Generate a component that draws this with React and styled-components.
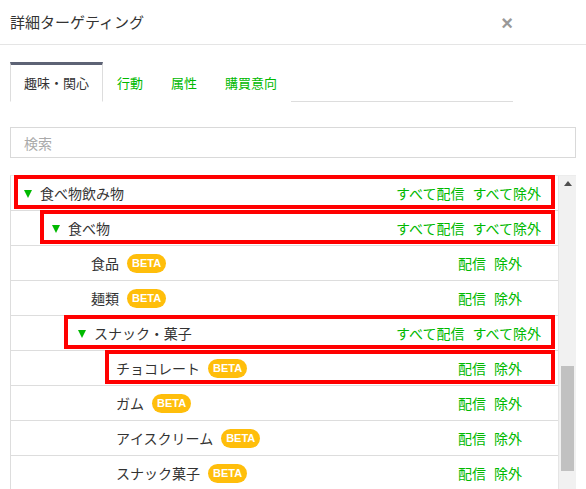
import React, { useState } from 'react';
import styled, { createGlobalStyle } from 'styled-components';

const GREEN = '#00b900';

const GlobalStyle = createGlobalStyle`
  body {
    margin: 0;
    background: #fff;
    overflow: hidden;
    font-family: "Noto Sans CJK JP", "Noto Sans", sans-serif;
    color: #333;
  }
`;

const rows = [
  { label: '食べ物飲み物', group: true, pad: 13, box: 3 },
  { label: '食べ物', group: true, pad: 41, box: 29 },
  { label: '食品', pad: 80, beta: true },
  { label: '麺類', pad: 80, beta: true },
  { label: 'スナック・菓子', group: true, pad: 67, box: 53 },
  { label: 'チョコレート', pad: 105, beta: true, box: 94 },
  { label: 'ガム', pad: 105, beta: true },
  { label: 'アイスクリーム', pad: 105, beta: true },
  { label: 'スナック菓子', pad: 105, beta: true },
];

const tabs = ['趣味・関心', '行動', '属性', '購買意向'];

const App = () => {
  const [active, setActive] = useState(0);
  return (
    <>
      <GlobalStyle />
      <Header>
        <Title>詳細ターゲティング</Title>
        <Close>×</Close>
      </Header>

      <TabBar>
        {tabs.map((t, i) => (
          <Tab key={t} active={i === active} onClick={() => setActive(i)}>
            {t}
          </Tab>
        ))}
      </TabBar>

      <Search placeholder="検索" />

      <List>
        <Rows>
          {rows.map((r) => (
            <Row key={r.label} pad={r.pad}>
              <Label>
                {r.group && <Caret />}
                {r.label}
                {r.beta && <Badge>BETA</Badge>}
              </Label>
              <Actions group={r.group}>
                <Action>{r.group ? 'すべて配信' : '配信'}</Action>
                <Action>{r.group ? 'すべて除外' : '除外'}</Action>
              </Actions>
              {r.box !== undefined && <Highlight left={r.box} />}
            </Row>
          ))}
        </Rows>
        <Scrollbar>
          <ArrowBox>
            <UpArrow />
          </ArrowBox>
          <Thumb />
        </Scrollbar>
      </List>
    </>
  );
};

const Header = styled.div`
  display: flex;
  align-items: center;
  justify-content: space-between;
  height: 44px;
  padding: 0 73px 0 10px;
  border-bottom: 1px solid #e5e5e5;
`;

const Title = styled.h1`
  margin: 0 0 2px;
  font-size: 15px;
  font-weight: 400;
  color: #333;
`;

const Close = styled.span`
  font-family: "Liberation Sans", Arial, sans-serif;
  font-size: 20px;
  font-weight: 700;
  color: #999;
  line-height: 1;
  margin-top: 1px;
`;

const TabBar = styled.div`
  display: flex;
  margin: 17px 73px 0 10px;
  border-bottom: 1px solid #ddd;
`;

const Tab = styled.div`
  box-sizing: border-box;
  height: 40px;
  display: flex;
  align-items: center;
  padding: 0 13px 2px;
  font-size: 13px;
  cursor: pointer;
  margin-bottom: -1px;
  border-top: 3px solid ${(p) => (p.active ? '#5d6375' : 'transparent')};
  border-left: 1px solid ${(p) => (p.active ? '#ddd' : 'transparent')};
  border-right: 1px solid ${(p) => (p.active ? '#ddd' : 'transparent')};
  border-bottom: 1px solid ${(p) => (p.active ? '#fff' : 'transparent')};
  background: #fff;
  color: ${(p) => (p.active ? '#333' : GREEN)};
`;

const Search = styled.input`
  display: block;
  box-sizing: border-box;
  width: 566px;
  height: 31px;
  margin: 25px 0 0 10px;
  padding: 0 13px;
  border: 1px solid #d9d9d9;
  font-family: inherit;
  font-size: 14px;
  color: #333;
  outline: none;
  &::placeholder {
    color: #aaa;
  }
`;

const List = styled.div`
  display: flex;
  width: 566px;
  margin: 17px 0 0 10px;
  border-left: 1px solid #ddd;
  border-top: 1px solid #ececec;
  box-sizing: border-box;
`;

const Rows = styled.div`
  flex: 1;
  border-right: 1px solid #e5e5e5;
`;

const Row = styled.div`
  position: relative;
  display: flex;
  align-items: center;
  justify-content: space-between;
  height: 34px;
  padding-left: ${(p) => p.pad}px;
  border-bottom: 1px solid #ddd;
  font-size: 14px;
`;

const Label = styled.div`
  display: flex;
  align-items: center;
  color: #333;
`;

const Caret = styled.span`
  width: 0;
  height: 0;
  border-left: 4.5px solid transparent;
  border-right: 4.5px solid transparent;
  border-top: 8px solid ${GREEN};
  margin-right: 8px;
  margin-top: 1px;
`;

const Badge = styled.span`
  margin-left: 8px;
  height: 19px;
  line-height: 19px;
  padding: 0 5px;
  border-radius: 10px;
  background: #ffbe0b;
  color: #fff;
  font-family: "Liberation Sans", Arial, sans-serif;
  font-size: 11px;
  font-weight: 700;
`;

const Actions = styled.div`
  display: flex;
  gap: 8px;
  padding-right: ${(p) => (p.group ? 17 : 36)}px;
`;

const Action = styled.span`
  color: ${GREEN};
  cursor: pointer;
`;

const Highlight = styled.div`
  position: absolute;
  top: -1px;
  bottom: 1px;
  left: ${(p) => p.left}px;
  right: 3px;
  border: 4px solid #ff0000;
  pointer-events: none;
`;

const Scrollbar = styled.div`
  width: 17px;
  background: #f1f1f1;
  display: flex;
  flex-direction: column;
  align-items: center;
`;

const ArrowBox = styled.div`
  height: 17px;
  width: 17px;
  display: flex;
  align-items: center;
  justify-content: center;
`;

const UpArrow = styled.span`
  width: 0;
  height: 0;
  border-left: 4px solid transparent;
  border-right: 4px solid transparent;
  border-bottom: 5px solid #505050;
  margin-top: -2px;
`;

const Thumb = styled.div`
  width: 13px;
  height: 105px;
  margin-top: 173px;
  background: #c1c1c1;
`;

export default App;
